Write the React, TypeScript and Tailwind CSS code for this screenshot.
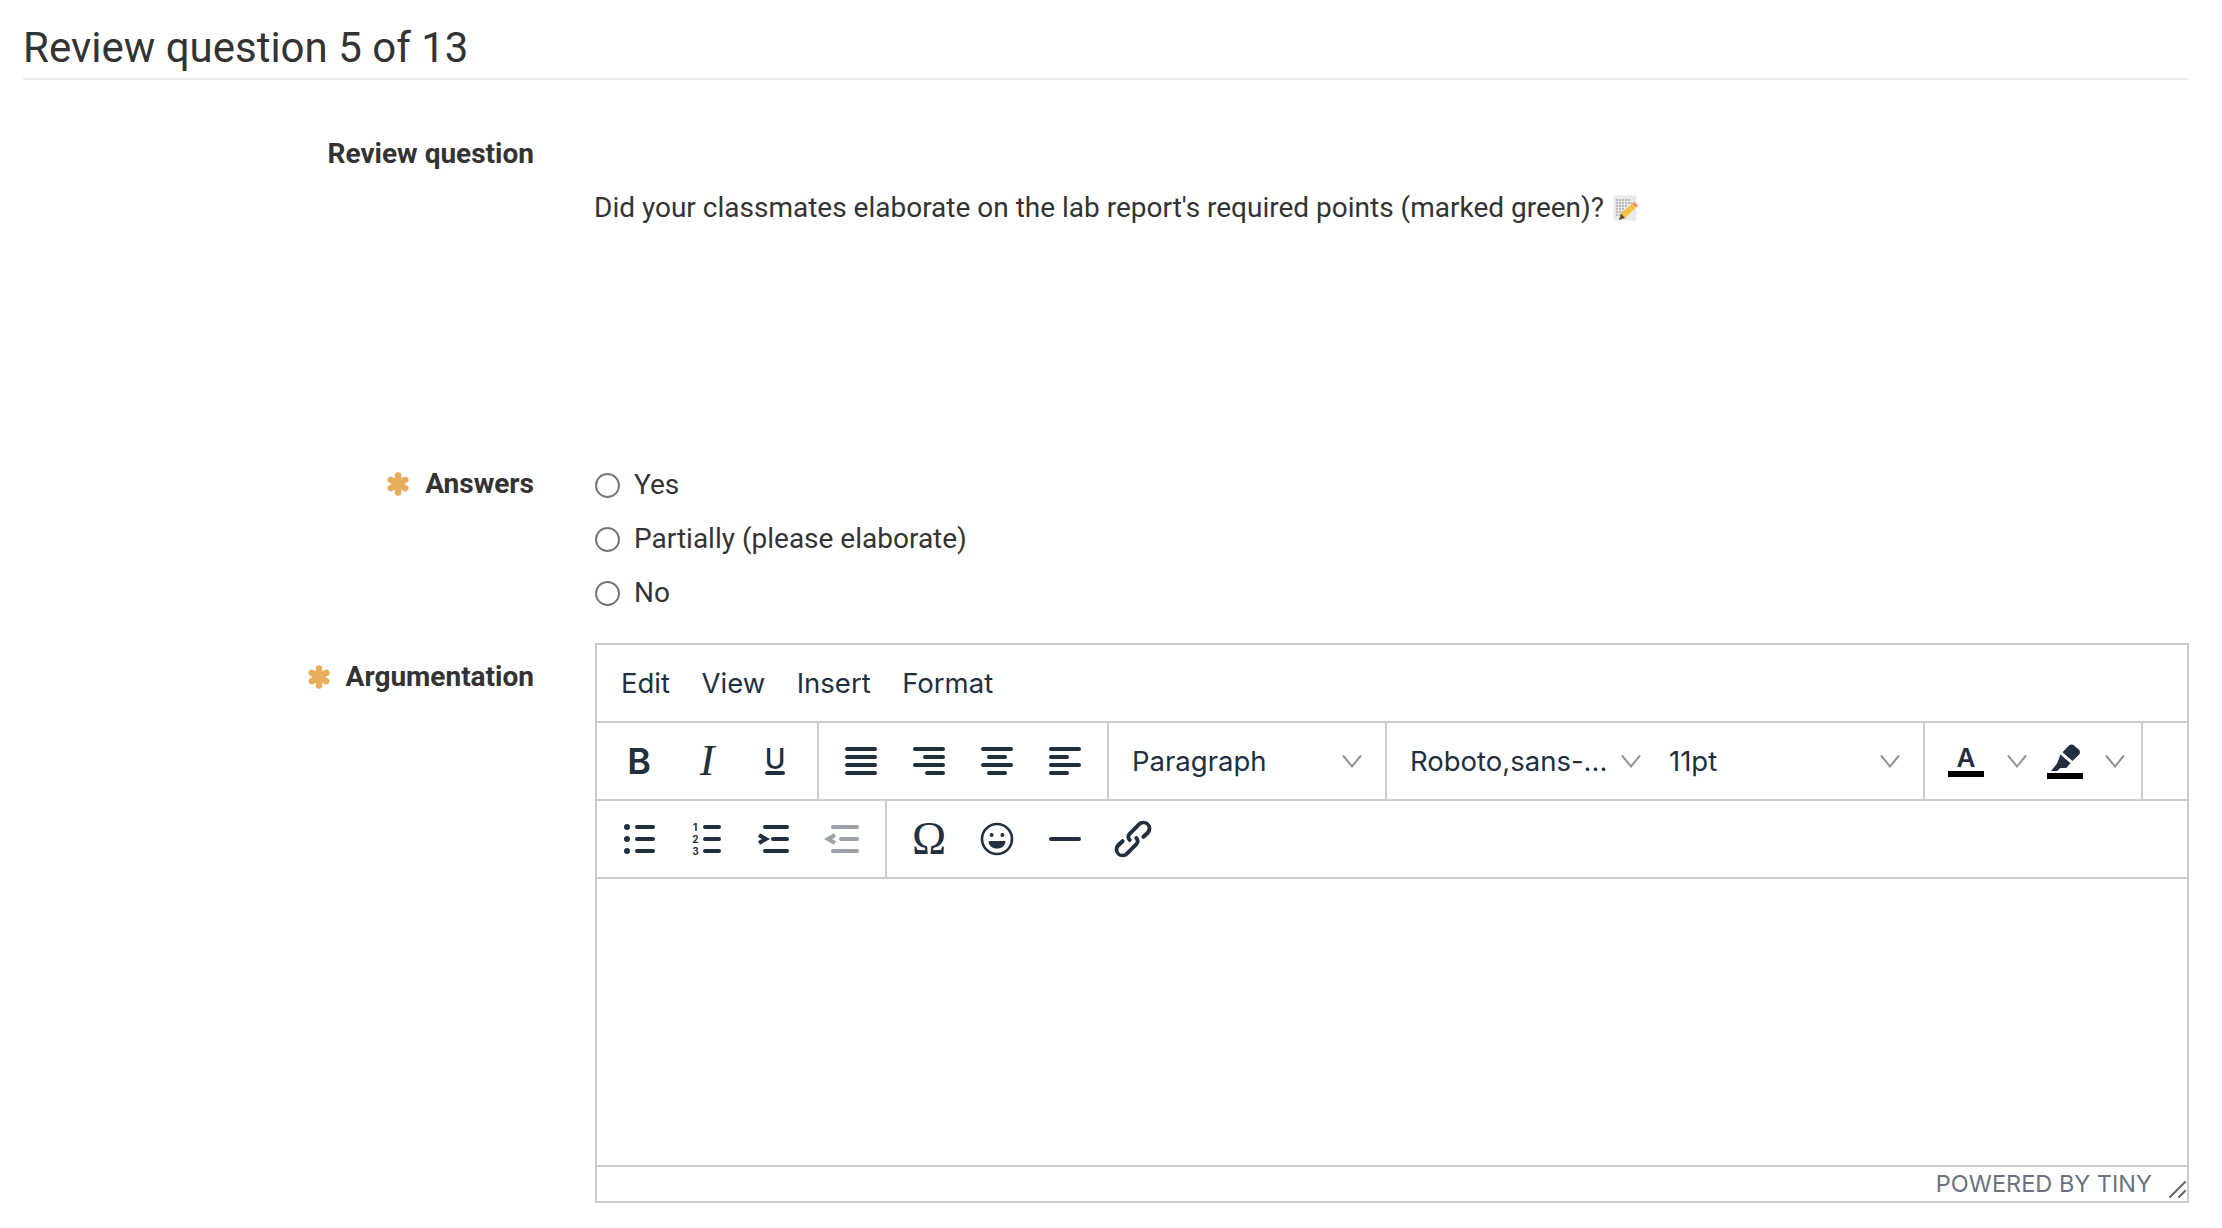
import React from 'react';

const ink = '#222f3e';

const Bars = ({ rows, color = ink }: { rows: number[][]; color?: string }) => (
  <svg width="48" height="48" viewBox="0 0 24 24" fill={color}>
    {rows.map(([x1, x2], i) => (
      <rect key={i} x={x1} y={5 + i * 4} width={x2 - x1} height="2" rx="1" />
    ))}
  </svg>
);

const IconBtn = ({ children }: { children: React.ReactNode }) => (
  <div className="w-[68px] h-full flex items-center justify-center shrink-0">{children}</div>
);

const Chevron = () => (
  <svg width="20" height="14" viewBox="0 0 20 14" fill="none" stroke="#8f959d" strokeWidth="2">
    <path d="M1 1.500l9 11 9-11" />
  </svg>
);

const Star = () => (
  <svg width="24" height="24" viewBox="0 0 24 24" stroke="#e8ad5b" strokeWidth="6.500" strokeLinecap="round">
    <path d="M12 3.500v17M4.700 7.800l14.600 8.400M19.300 7.800L4.700 16.200" />
  </svg>
);

const Required = ({ label }: { label: string }) => (
  <div className="flex items-center justify-end gap-[15px]">
    <Star />
    <span className="font-bold">{label}</span>
  </div>
);

const Radio = ({ label }: { label: string }) => (
  <label className="flex items-center h-[54px] gap-[14px]">
    <input type="radio" name="answer" className="appearance-none w-[25px] h-[25px] m-0 rounded-full border-2 border-[#767676] bg-white" />
    <span>{label}</span>
  </label>
);

// little notepad + pencil, stands in for the emoji image
const Memo = () => (
  <svg width="26" height="26" viewBox="0 0 26 26" className="inline-block ml-[9px] align-[-4px]">
    <rect x="0.5" y="0.5" width="23" height="25" rx="1" fill="#e9e9e9" />
    <path d="M3 5h14M3 8h16M3 11h12M3 14h9M3 17h7M3 20h6" stroke="#8a8a8a" strokeWidth="1" strokeDasharray="2 1" />
    <path d="M21 7l4 3.500L12 23l-6 2 2-6.500z" fill="#f2c43d" />
    <path d="M21 7l4 3.500-1.800 1.800-4-3.500z" fill="#e88a8a" />
    <path d="M6 25l2-6.500 4 4.500z" fill="#5c5140" />
  </svg>
);

export default function App() {
  return (
    <div className="min-h-screen bg-white pl-[23px] pr-[33px] text-[#333] text-[28px] leading-[40px]" style={{ fontFamily: 'Roboto, sans-serif' }}>
      <h1 className="h-[80px] pt-[25px] border-b-2 border-[#eeeeee] text-[42px] leading-[46px] font-normal">
        Review question 5 of 13
      </h1>

      <div className="flex mt-[54px]">
        <div className="w-[511px] shrink-0 text-right font-bold">Review question</div>
      </div>
      <div className="flex mt-[14px] h-[270px]">
        <div className="w-[571px] shrink-0" />
        <p>
          Did your classmates elaborate on the lab report's required points (marked green)?
          <Memo />
        </p>
      </div>

      <div className="flex">
        <div className="w-[511px] shrink-0 pt-[6px]">
          <Required label="Answers" />
        </div>
        <div className="ml-[61px] flex flex-col">
          <Radio label="Yes" />
          <Radio label="Partially (please elaborate)" />
          <Radio label="No" />
        </div>
      </div>

      <div className="flex mt-[23px]">
        <div className="w-[511px] shrink-0 pt-[14px]">
          <Required label="Argumentation" />
        </div>
        <div className="ml-[61px] flex-1 border-2 border-[#cccccc] text-[#222f3e] text-[27.5px]" style={{ fontFamily: 'Inter, sans-serif' }}>
          <div className="h-[78px] border-b-2 border-[#cccccc] flex items-center pl-[24px] gap-[31.5px]">
            <span>Edit</span>
            <span>View</span>
            <span>Insert</span>
            <span>Format</span>
          </div>

          {/* first toolbar row */}
          <div className="h-[78px] border-b-2 border-[#cccccc] flex">
            <div className="w-[222px] px-[8px] border-r-2 border-[#cccccc] flex">
              <IconBtn><span className="text-[36px] font-semibold leading-none">B</span></IconBtn>
              <IconBtn><span className="text-[44px] italic leading-none" style={{ fontFamily: '"Liberation Serif", serif' }}>I</span></IconBtn>
              <IconBtn>
                <div className="flex flex-col items-center">
                  <span className="text-[28px] font-medium leading-[24px]">U</span>
                  <span className="w-[20px] h-[4px] rounded-full bg-[#222f3e]" />
                </div>
              </IconBtn>
            </div>
            <div className="w-[290px] px-[8px] border-r-2 border-[#cccccc] flex">
              <IconBtn><Bars rows={[[4, 20], [4, 20], [4, 20], [4, 20]]} /></IconBtn>
              <IconBtn><Bars rows={[[4, 20], [9, 20], [4, 20], [10, 20]]} /></IconBtn>
              <IconBtn><Bars rows={[[4, 20], [7, 17], [4, 20], [7, 17]]} /></IconBtn>
              <IconBtn><Bars rows={[[4, 20], [4, 14], [4, 20], [4, 14]]} /></IconBtn>
            </div>
            <div className="w-[278px] pl-[23px] pr-[23px] border-r-2 border-[#cccccc] flex items-center justify-between">
              <span>Paragraph</span>
              <Chevron />
            </div>
            <div className="w-[538px] pl-[23px] pr-[23px] border-r-2 border-[#cccccc] flex items-center">
              <span className="w-[211px]">Roboto,sans-...</span>
              <Chevron />
              <span className="ml-[28px] flex-1">11pt</span>
              <Chevron />
            </div>
            <div className="w-[218px] border-r-2 border-[#cccccc] flex items-center pl-[23px]">
              <div className="w-[36px] flex flex-col items-center">
                <span className="text-[26px] font-semibold leading-[24px]">A</span>
                <span className="w-[36px] h-[6px] bg-black mt-[1px]" />
              </div>
              <div className="ml-[23px]"><Chevron /></div>
              <div className="ml-[20px] w-[36px] flex flex-col items-center">
                <svg width="32" height="28" viewBox="0 0 32 28" fill={ink}>
                  <path d="M20 1.500c1.300-1.300 3.400-1.400 4.800-.2l5 4.300c1.500 1.300 1.600 3.600.3 5L23.500 17 13.500 8.200zM11.500 10.500l10 8.700-4.300 4.800h-6l-3 3H2l6-7.500z" />
                </svg>
                <span className="w-[36px] h-[6px] bg-black mt-[1px]" />
              </div>
              <div className="ml-[22px]"><Chevron /></div>
            </div>
          </div>

          {/* second toolbar row */}
          <div className="h-[78px] border-b-2 border-[#cccccc] flex">
            <div className="w-[290px] px-[8px] border-r-2 border-[#cccccc] flex">
              <IconBtn>
                <svg width="48" height="48" viewBox="0 0 24 24" fill={ink}>
                  <circle cx="6" cy="6" r="1.500" />
                  <circle cx="6" cy="12" r="1.500" />
                  <circle cx="6" cy="18" r="1.500" />
                  <rect x="10" y="5" width="10" height="2" rx="1" />
                  <rect x="10" y="11" width="10" height="2" rx="1" />
                  <rect x="10" y="17" width="10" height="2" rx="1" />
                </svg>
              </IconBtn>
              <IconBtn>
                <svg width="48" height="48" viewBox="0 0 24 24" fill={ink}>
                  <text x="5" y="8" fontSize="5" fontWeight="700" fontFamily="Inter, sans-serif">1</text>
                  <text x="4.600" y="14" fontSize="5" fontWeight="700" fontFamily="Inter, sans-serif">2</text>
                  <text x="4.600" y="20" fontSize="5" fontWeight="700" fontFamily="Inter, sans-serif">3</text>
                  <rect x="10" y="5" width="9" height="2" rx="1" />
                  <rect x="10" y="11" width="9" height="2" rx="1" />
                  <rect x="10" y="17" width="9" height="2" rx="1" />
                </svg>
              </IconBtn>
              <IconBtn>
                <svg width="48" height="48" viewBox="0 0 24 24" fill={ink}>
                  <rect x="6" y="5" width="13" height="2" rx="1" />
                  <rect x="10" y="11" width="9" height="2" rx="1" />
                  <rect x="6" y="17" width="13" height="2" rx="1" />
                  <path d="M4 10l3.500 2L4 14" fill="none" stroke={ink} strokeWidth="2" />
                </svg>
              </IconBtn>
              <IconBtn>
                <svg width="48" height="48" viewBox="0 0 24 24" fill="#9ba1a8">
                  <rect x="6" y="5" width="14" height="2" rx="1" />
                  <rect x="10" y="11" width="10" height="2" rx="1" />
                  <rect x="6" y="17" width="14" height="2" rx="1" />
                  <path d="M8 10l-3.500 2L8 14" fill="none" stroke="#9ba1a8" strokeWidth="2" />
                </svg>
              </IconBtn>
            </div>
            <div className="px-[8px] flex">
              <IconBtn><span className="text-[46px] leading-none" style={{ fontFamily: '"Liberation Serif", serif' }}>Ω</span></IconBtn>
              <IconBtn>
                <svg width="48" height="48" viewBox="0 0 24 24" fill={ink}>
                  <circle cx="12" cy="12" r="7.500" fill="none" stroke={ink} strokeWidth="1.300" />
                  <circle cx="9.300" cy="10" r="1" />
                  <circle cx="14.700" cy="10" r="1" />
                  <path d="M7.800 13h8.400c0 2.300-1.900 3.800-4.200 3.800S7.800 15.300 7.800 13z" />
                </svg>
              </IconBtn>
              <IconBtn>
                <svg width="48" height="48" viewBox="0 0 24 24" fill={ink}>
                  <rect x="4" y="11" width="16" height="2" rx="1" />
                </svg>
              </IconBtn>
              <IconBtn>
                <svg width="48" height="48" viewBox="0 0 24 24" fill={ink}>
                  <path d="M6.200 12.300a1 1 0 0 1 1.400 1.400l-2.100 2.100a2 2 0 1 0 2.800 2.800l4.800-4.800a1 1 0 0 0 0-1.400 1 1 0 1 1 1.300-1.500 3 3 0 0 1 0 4.300l-4.700 4.800a4 4 0 0 1-5.700-5.700l2.200-2.100zm11.600-.6a1 1 0 0 1-1.400-1.400l2.100-2.100a2 2 0 1 0-2.800-2.800L10.900 10.200a1 1 0 0 0 0 1.400 1 1 0 1 1-1.300 1.500 3 3 0 0 1 0-4.300l4.700-4.800a4 4 0 0 1 5.700 5.700l-2.200 2.100z" />
                </svg>
              </IconBtn>
            </div>
          </div>

          <div className="h-[286px]" />

          <div className="h-[36px] border-t-2 border-[#cccccc] flex items-center justify-end text-[23.5px] leading-none text-[#6a7280]">
            <span>POWERED BY TINY</span>
            <svg width="18" height="18" viewBox="0 0 18 18" className="ml-[17px] mt-[12px]" stroke="#5f6873" strokeWidth="2" strokeLinecap="round">
              <path d="M1 16L16 1M10 16l6-6" />
            </svg>
          </div>
        </div>
      </div>
    </div>
  );
}
